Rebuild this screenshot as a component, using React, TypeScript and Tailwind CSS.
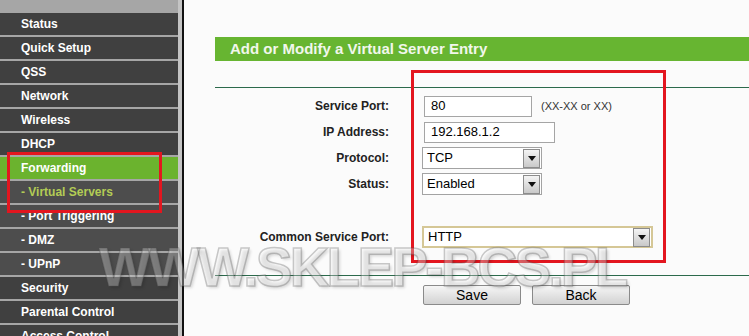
import React from "react";

type NavItem = {
    label: string;
    kind: "main" | "sub" | "active" | "current";
};

const NAV: NavItem[] = [
    { label: "Status", kind: "main" },
    { label: "Quick Setup", kind: "main" },
    { label: "QSS", kind: "main" },
    { label: "Network", kind: "main" },
    { label: "Wireless", kind: "main" },
    { label: "DHCP", kind: "main" },
    { label: "Forwarding", kind: "active" },
    { label: "- Virtual Servers", kind: "current" },
    { label: "- Port Triggering", kind: "sub" },
    { label: "- DMZ", kind: "sub" },
    { label: "- UPnP", kind: "sub" },
    { label: "Security", kind: "main" },
    { label: "Parental Control", kind: "main" },
    { label: "Access Control", kind: "main" },
];

const itemStyles: Record<NavItem["kind"], string> = {
    main: "bg-[#404040] text-white",
    sub: "bg-[#4d4d4d] text-white",
    active: "bg-[#6bb32e] text-white",
    current: "bg-[#4d4d4d] text-[#b3cc55]",
};

function SelectArrow() {
    return (
        <span className="flex items-center justify-center w-[17px] h-[19px] border border-[#8c8c8c] bg-gradient-to-b from-[#f4f4f4] to-[#c9c9c9]">
            <svg width="8" height="5" viewBox="0 0 8 5">
                <path d="M0 0 H8 L4 5 Z" fill="#111" />
            </svg>
        </span>
    );
}

function FakeSelect({ value, width, beige }: { value: string; width: string; beige?: boolean }) {
    return (
        <div
            className={`flex items-center justify-between h-[22px] bg-white pl-[4px] pr-[1px] ${width} ${
                beige ? "border-2 border-[#d5c796]" : "border border-[#a3a3a3]"
            }`}
        >
            <span className="text-[13px] text-black">{value}</span>
            <SelectArrow />
        </div>
    );
}

function FormRow({ label, children }: { label: string; children: React.ReactNode }) {
    return (
        <div className="flex items-center h-[26px]">
            <div className="w-[174px] text-right text-[12px] font-bold text-[#222]">{label}</div>
            <div className="ml-[33px] flex items-center">{children}</div>
        </div>
    );
}

export default function App() {
    return (
        <div className="relative flex w-[749px] h-[336px] overflow-hidden bg-[#fbfbfb] font-['Liberation_Sans',Arial,sans-serif]">
            {/* sidebar */}
            <div className="flex flex-col gap-[2px] w-[178px] shrink-0 bg-[#a6a6a6] pt-[13px]">
                {NAV.map((item) => (
                    <div
                        key={item.label}
                        className={`flex items-center h-[22px] shrink-0 pl-[21px] text-[12px] font-bold ${itemStyles[item.kind]}`}
                    >
                        {item.label}
                    </div>
                ))}
            </div>
            <div className="w-[4px] shrink-0 bg-[#c4c4c4]" />
            <div className="w-[2px] shrink-0 bg-[#111]" />

            {/* content */}
            <div className="flex-1 pl-[31px] pt-[37px]">
                <div className="flex items-center h-[24px] bg-[#67b531] pl-[15px] text-[15px] font-bold text-[#f1f7ec]">
                    Add or Modify a Virtual Server Entry
                </div>
                <div className="mt-[26px] h-px bg-[#2c6a4c]" />

                <div className="mt-[5px] flex flex-col">
                    <FormRow label="Service Port:">
                        <div className="flex items-center w-[108px] h-[21px] ml-[2px] border border-[#a5a5a5] bg-white pl-[6px] text-[13px]">
                            80
                        </div>
                        <span className="ml-[9px] text-[11px] text-[#333]">(XX-XX or XX)</span>
                    </FormRow>
                    <FormRow label="IP Address:">
                        <div className="flex items-center w-[131px] h-[21px] ml-[2px] border border-[#a5a5a5] bg-white pl-[6px] text-[13px]">
                            192.168.1.2
                        </div>
                    </FormRow>
                    <FormRow label="Protocol:">
                        <FakeSelect value="TCP" width="w-[120px]" />
                    </FormRow>
                    <FormRow label="Status:">
                        <FakeSelect value="Enabled" width="w-[120px]" />
                    </FormRow>
                </div>

                <div className="mt-[27px]">
                    <FormRow label="Common Service Port:">
                        <FakeSelect value="HTTP" width="w-[231px]" beige />
                    </FormRow>
                </div>

                <div className="mt-[25px] h-px bg-[#2c6a4c]" />

                <div className="mt-[9px] ml-[208px] flex gap-[11px]">
                    <button className="w-[98px] h-[20px] rounded-[2px] border border-[#8a8a8a] bg-gradient-to-b from-[#f6f6f6] to-[#d2d2d2] text-[14px] leading-none text-black">
                        Save
                    </button>
                    <button className="w-[98px] h-[20px] rounded-[2px] border border-[#8a8a8a] bg-gradient-to-b from-[#f6f6f6] to-[#d2d2d2] text-[14px] leading-none text-black">
                        Back
                    </button>
                </div>
            </div>

            {/* red highlight boxes */}
            <div className="absolute left-[411px] top-[70px] w-[255px] h-[193px] border-[3px] border-[#e3161f]" />
            <div className="absolute left-[7px] top-[152px] w-[155px] h-[61px] border-[3px] border-[#e3161f]" />

            {/* watermark */}
            <div className="absolute left-[99px] top-[240px] text-[55px] font-bold leading-none tracking-[-2.8px] text-white/30 [-webkit-text-stroke:1.5px_rgba(80,80,80,0.3)] [text-shadow:2px_2px_3px_rgba(0,0,0,0.15)] pointer-events-none">
                WWW.SKLEP-BCS.PL
            </div>
        </div>
    );
}
